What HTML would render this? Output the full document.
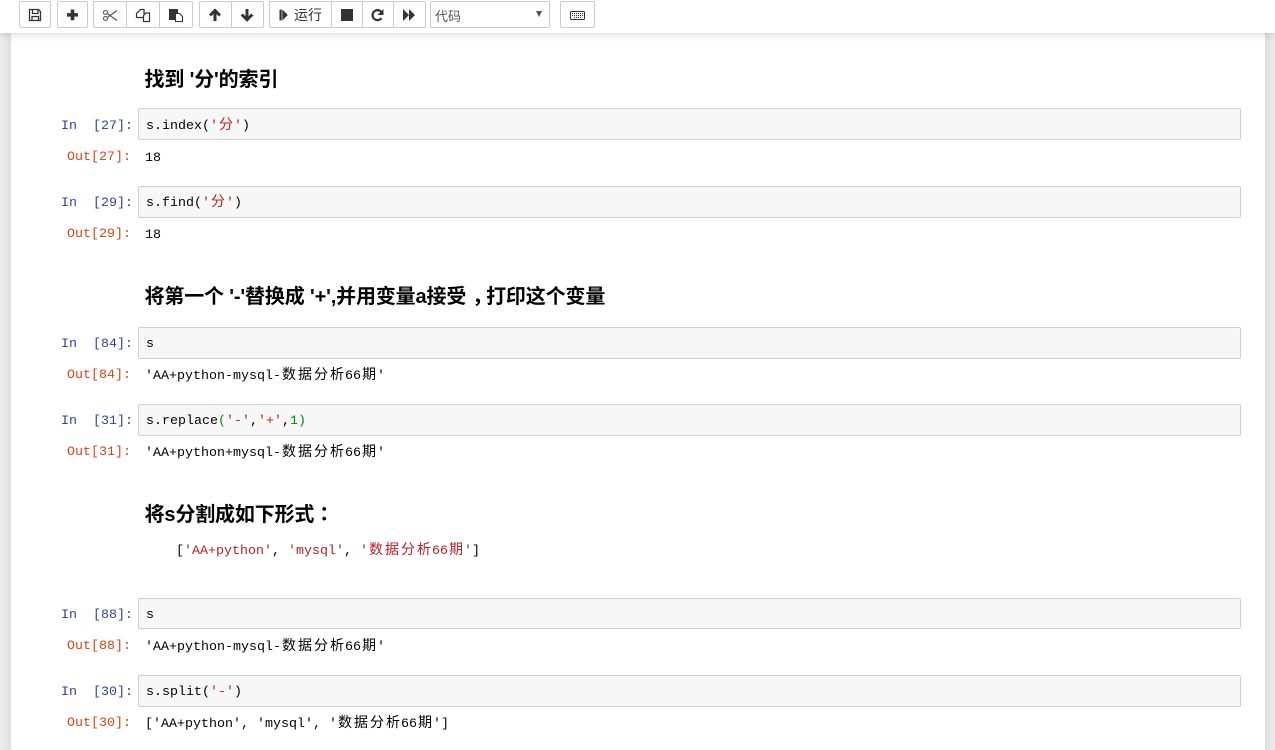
<!DOCTYPE html>
<html><head><meta charset="utf-8">
<style>
html,body{margin:0;padding:0;width:1275px;height:750px;overflow:hidden;background:#fff;}
body{position:relative;font-family:"Liberation Sans","Noto Sans CJK SC",sans-serif;}
.sl{position:absolute;left:0;top:33px;width:11px;height:717px;background:linear-gradient(to right,#eeeeee,#e0e0e0);}
.sr{position:absolute;left:1265px;top:33px;width:10px;height:717px;background:linear-gradient(to right,#dedede,#eeeeee);}
.tb{position:absolute;left:0;top:0;width:1275px;height:33px;background:#fff;box-shadow:0 2px 8px rgba(0,0,0,.14);z-index:5;}
.b{position:absolute;top:1px;height:25px;border:1px solid #ccc;box-sizing:content-box;background:#fff;border-radius:2px;}
.b svg{position:absolute;left:-1px;top:-2px;}
.h{position:absolute;left:144.5px;font-size:20px;font-weight:bold;color:#000;line-height:26px;white-space:pre;letter-spacing:-.15px;}
.p{font-family:"Liberation Sans","Noto Sans CJK TC",sans-serif;}
.q{position:relative;left:6px;}
.box{position:absolute;left:138px;width:1101px;background:#f7f7f7;border:1px solid #cfcfcf;border-radius:2px;}
.m{position:absolute;font-family:"Liberation Mono","WenQuanYi Zen Hei",monospace;font-size:13.333px;line-height:18px;white-space:pre;color:#000;}
.in{color:#303f9f;}
.out{color:#d84315;}
.c{display:inline-block;width:16px;text-align:center;font-family:"WenQuanYi Zen Hei","Noto Sans CJK SC",sans-serif;font-size:14px;}
.r{color:#ba2121;}
.g{color:#080;}
</style></head><body>
<div class="sl"></div><div class="sr"></div>
<div class="tb">
<div class="b" style="left:19px;width:30px"><svg width="32" height="30" fill="none" stroke="#333" stroke-width="1.3"><path d="M10.500 9.500h9l2 2v9h-11zM13.500 9.500v4h5.500v-4M13 20.500v-4h6.500v4"/></svg></div>
<div class="b" style="left:57px;width:29px"><svg width="31" height="30" fill="#333"><path d="M13.700 9.500h3.600v3.600h3.700v3.500h-3.700v3.600h-3.600v-3.600H10v-3.500h3.700z"/></svg></div>
<div class="b" style="left:93px;width:32px;border-radius:2px 0 0 2px"><svg width="34" height="30" fill="none" stroke="#555" stroke-width="1.100"><circle cx="12.500" cy="12.500" r="2"/><circle cx="12.500" cy="18.500" r="2"/><path d="M14.300 13.500L24 20.500M14.300 17.500L24 10.500"/></svg></div>
<div class="b" style="left:126px;width:32px;border-radius:0"><svg width="34" height="30" fill="none" stroke="#333" stroke-width="1.200"><path d="M17.500 17.500h-7v-4l4-4h3.500v5"/><path d="M17.500 21.500v-6l2.500-2.500h3.500v8.500z"/></svg></div>
<div class="b" style="left:159px;width:32px;border-radius:0 2px 2px 0"><svg width="34" height="30"><path d="M10 9h9v4h-3v7h-6z" fill="#333"/><path d="M16.500 13.500h4l3 3v5h-7z" fill="#fff" stroke="#333" stroke-width="1.100"/></svg></div>
<div class="b" style="left:199px;width:31px;border-radius:2px 0 0 2px"><svg width="33" height="30" fill="none" stroke="#333" stroke-width="3"><path d="M16 21V11M11 15.500l5-5 5 5"/></svg></div>
<div class="b" style="left:231px;width:31px;border-radius:0 2px 2px 0"><svg width="33" height="30" fill="none" stroke="#333" stroke-width="3"><path d="M16 9v10M10.700 14.500l5.300 5.300 5.300-5.300"/></svg></div>
<div class="b" style="left:269px;width:61px;border-radius:2px 0 0 2px"><svg width="24" height="30" fill="#333"><path d="M10.500 9.500h2.200v11h-2.200zM13.300 9.500l5.500 5.500-5.500 5.500z"/></svg><span style="position:absolute;left:24px;top:4px;font-size:14px;line-height:18px;color:#333">运行</span></div>
<div class="b" style="left:331px;width:30px;border-radius:0"><svg width="32" height="30" fill="#333"><rect x="10" y="9" width="12" height="12"/></svg></div>
<div class="b" style="left:362px;width:30px;border-radius:0"><svg width="32" height="30" fill="none" stroke="#333" stroke-width="2.200"><path d="M19.500 18.200A5 5 0 1 1 19 11.500"/><path d="M21.500 9v6h-6z" fill="#333" stroke="none"/></svg></div>
<div class="b" style="left:393px;width:31px;border-radius:0 2px 2px 0"><svg width="33" height="30" fill="#333"><path d="M10 9l6 6-6 6zM16 9l6 6-6 6z"/></svg></div>
<div class="b" style="left:430px;width:118px"><span style="position:absolute;left:4px;top:6px;font-size:13px;line-height:18px;color:#555">代码</span><svg width="120" height="30" fill="#555"><path d="M106 11h6l-3 6z"/></svg></div>
<div class="b" style="left:560px;width:33px"><svg width="35" height="30" fill="none" stroke="#333" stroke-width="1"><rect x="10.500" y="11.500" width="14" height="8" rx="1"/><path d="M12 13.500h11M12 15.500h11M14 17.500h7" stroke-dasharray="1 1"/></svg></div>
</div>

<div class="h" style="top:67px">找到 '分'的索引</div>

<div class="m in" style="left:61px;top:118px">In  [27]:</div>
<div class="box" style="top:108px;height:30px"></div>
<div class="m" style="left:146px;top:115px">s.index(<span class="r">'<span class="c">分</span>'</span>)</div>
<div class="m out" style="left:67px;top:149px">Out[27]:</div>
<div class="m" style="left:145px;top:150px">18</div>

<div class="m in" style="left:61px;top:195px">In  [29]:</div>
<div class="box" style="top:186px;height:30px"></div>
<div class="m" style="left:146px;top:192px">s.find(<span class="r">'<span class="c">分</span>'</span>)</div>
<div class="m out" style="left:67px;top:226px">Out[29]:</div>
<div class="m" style="left:145px;top:227px">18</div>

<div class="h" style="top:284px">将第一个 '-'替换成 '+',并用变量a接受<span class="q">，</span>打印这个变量</div>

<div class="m in" style="left:61px;top:336px">In  [84]:</div>
<div class="box" style="top:327px;height:30px"></div>
<div class="m" style="left:146px;top:336px">s</div>
<div class="m out" style="left:67px;top:367px">Out[84]:</div>
<div class="m" style="left:145px;top:365px">'AA+python-mysql-<span class="c">数</span><span class="c">据</span><span class="c">分</span><span class="c">析</span>66<span class="c">期</span>'</div>

<div class="m in" style="left:61px;top:413px">In  [31]:</div>
<div class="box" style="top:404px;height:30px"></div>
<div class="m" style="left:146px;top:413px">s.replace<span class="g">(</span><span class="r">'-'</span>,<span class="r">'+'</span>,<span class="g">1)</span></div>
<div class="m out" style="left:67px;top:444px">Out[31]:</div>
<div class="m" style="left:145px;top:442px">'AA+python+mysql-<span class="c">数</span><span class="c">据</span><span class="c">分</span><span class="c">析</span>66<span class="c">期</span>'</div>

<div class="h" style="top:502px">将s分割成如下形式<span class="p">：</span></div>
<div class="m" style="left:176px;top:540px">[<span class="r">'AA+python'</span>, <span class="r">'mysql'</span>, <span class="r">'<span class="c">数</span><span class="c">据</span><span class="c">分</span><span class="c">析</span>66<span class="c">期</span>'</span>]</div>

<div class="m in" style="left:61px;top:607px">In  [88]:</div>
<div class="box" style="top:598px;height:29px"></div>
<div class="m" style="left:146px;top:607px">s</div>
<div class="m out" style="left:67px;top:638px">Out[88]:</div>
<div class="m" style="left:145px;top:636px">'AA+python-mysql-<span class="c">数</span><span class="c">据</span><span class="c">分</span><span class="c">析</span>66<span class="c">期</span>'</div>

<div class="m in" style="left:61px;top:684px">In  [30]:</div>
<div class="box" style="top:675px;height:30px"></div>
<div class="m" style="left:146px;top:684px">s.split(<span class="r">'-'</span>)</div>
<div class="m out" style="left:67px;top:715px">Out[30]:</div>
<div class="m" style="left:145px;top:713px">['AA+python', 'mysql', '<span class="c">数</span><span class="c">据</span><span class="c">分</span><span class="c">析</span>66<span class="c">期</span>']</div>
</body></html>
